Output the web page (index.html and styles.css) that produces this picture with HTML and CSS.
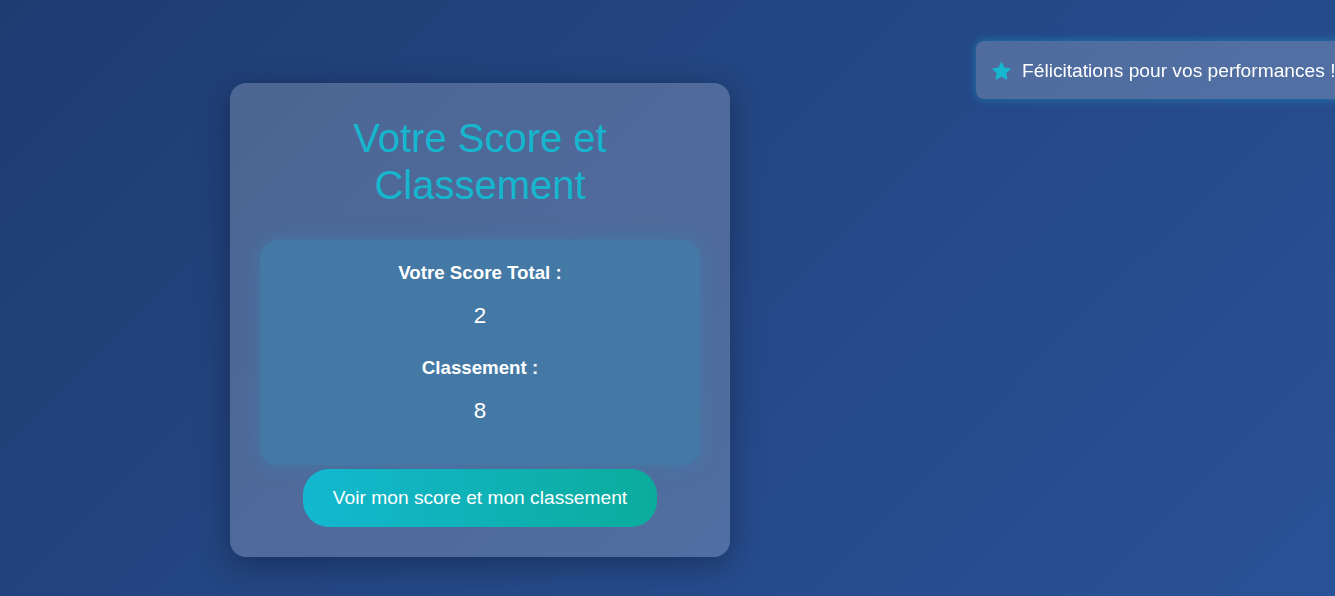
FILE: index.html
```html
<!DOCTYPE html>
<html lang="fr">
<head>
<meta charset="utf-8">
<title>Votre Score et Classement</title>
<link rel="stylesheet" href="styles.css">
</head>
<body>
<main class="page">
  <section class="card">
    <h1 class="title">Votre Score et Classement</h1>
    <div class="score-box">
      <h3 class="label">Votre Score Total :</h3>
      <p class="value">2</p>
      <h3 class="label">Classement :</h3>
      <p class="value value-last">8</p>
    </div>
    <button class="btn" type="button">Voir mon score et mon classement</button>
  </section>
</main>
<div class="toast">
  <svg class="toast-icon" viewBox="0 0 24 24" width="21" height="21" aria-hidden="true">
    <path d="M12 2.2l2.9 6.1 6.6.8-4.9 4.6 1.3 6.6L12 17.1l-5.9 3.2 1.3-6.6-4.9-4.6 6.6-.8z" fill="#17b8d0" stroke="#17b8d0" stroke-width="1.6" stroke-linejoin="round"/>
  </svg>
  <span class="toast-text">Félicitations pour vos performances !</span>
</div>
</body>
</html>
```
FILE: styles.css
```css
html {
  overflow: hidden;
}
body {
  margin: 0;
  min-height: 596px;
  font-family: "Liberation Sans", Arial, sans-serif;
  background: linear-gradient(135deg, #1e3c72 0%, #2a5298 100%);
  color: #fff;
}
.page {
  padding: 83px 0 0 230px;
}
.card {
  width: 500px;
  box-sizing: border-box;
  padding: 30px;
  background: rgba(255, 255, 255, 0.2);
  border-radius: 16px;
  box-shadow: 0 8px 32px rgba(0, 0, 0, 0.3);
  display: flex;
  flex-direction: column;
  align-items: center;
  text-align: center;
}
.title {
  margin: 2px 0 31px;
  font-size: 40px;
  line-height: 47px;
  font-weight: normal;
  color: #16b6cf;
  padding: 0 10px;
}
.score-box {
  align-self: stretch;
  padding: 22px 20px 41px;
  background: #4479a6;
  border-radius: 18px;
  box-shadow: 0 0 18px 3px rgba(68, 121, 166, 0.75);
}
.label {
  margin: 0 0 19px;
  font-size: 18.72px;
  line-height: 22px;
  font-weight: bold;
}
.value {
  margin: 0 0 28px;
  font-size: 22.4px;
  line-height: 26px;
}
.value-last {
  margin-bottom: 0;
}
.btn {
  margin-top: 4px;
  padding: 18px 30px;
  border: none;
  border-radius: 26px;
  background: linear-gradient(90deg, #13b8d0 0%, #0bac9c 100%);
  color: #fff;
  font-family: "Liberation Sans", Arial, sans-serif;
  font-size: 19.2px;
  line-height: 22px;
  cursor: pointer;
}
.toast {
  position: fixed;
  top: 41px;
  left: 976px;
  height: 58px;
  box-sizing: border-box;
  padding: 2px 20px 0 15px;
  display: flex;
  align-items: center;
  gap: 10px;
  white-space: nowrap;
  background: rgba(255, 255, 255, 0.2);
  border-radius: 8px;
  box-shadow: 0 0 10px rgba(23, 184, 208, 0.45);
}
.toast-icon {
  flex: none;
  display: block;
}
.toast-text {
  font-size: 19.2px;
  line-height: 22px;
}
```
